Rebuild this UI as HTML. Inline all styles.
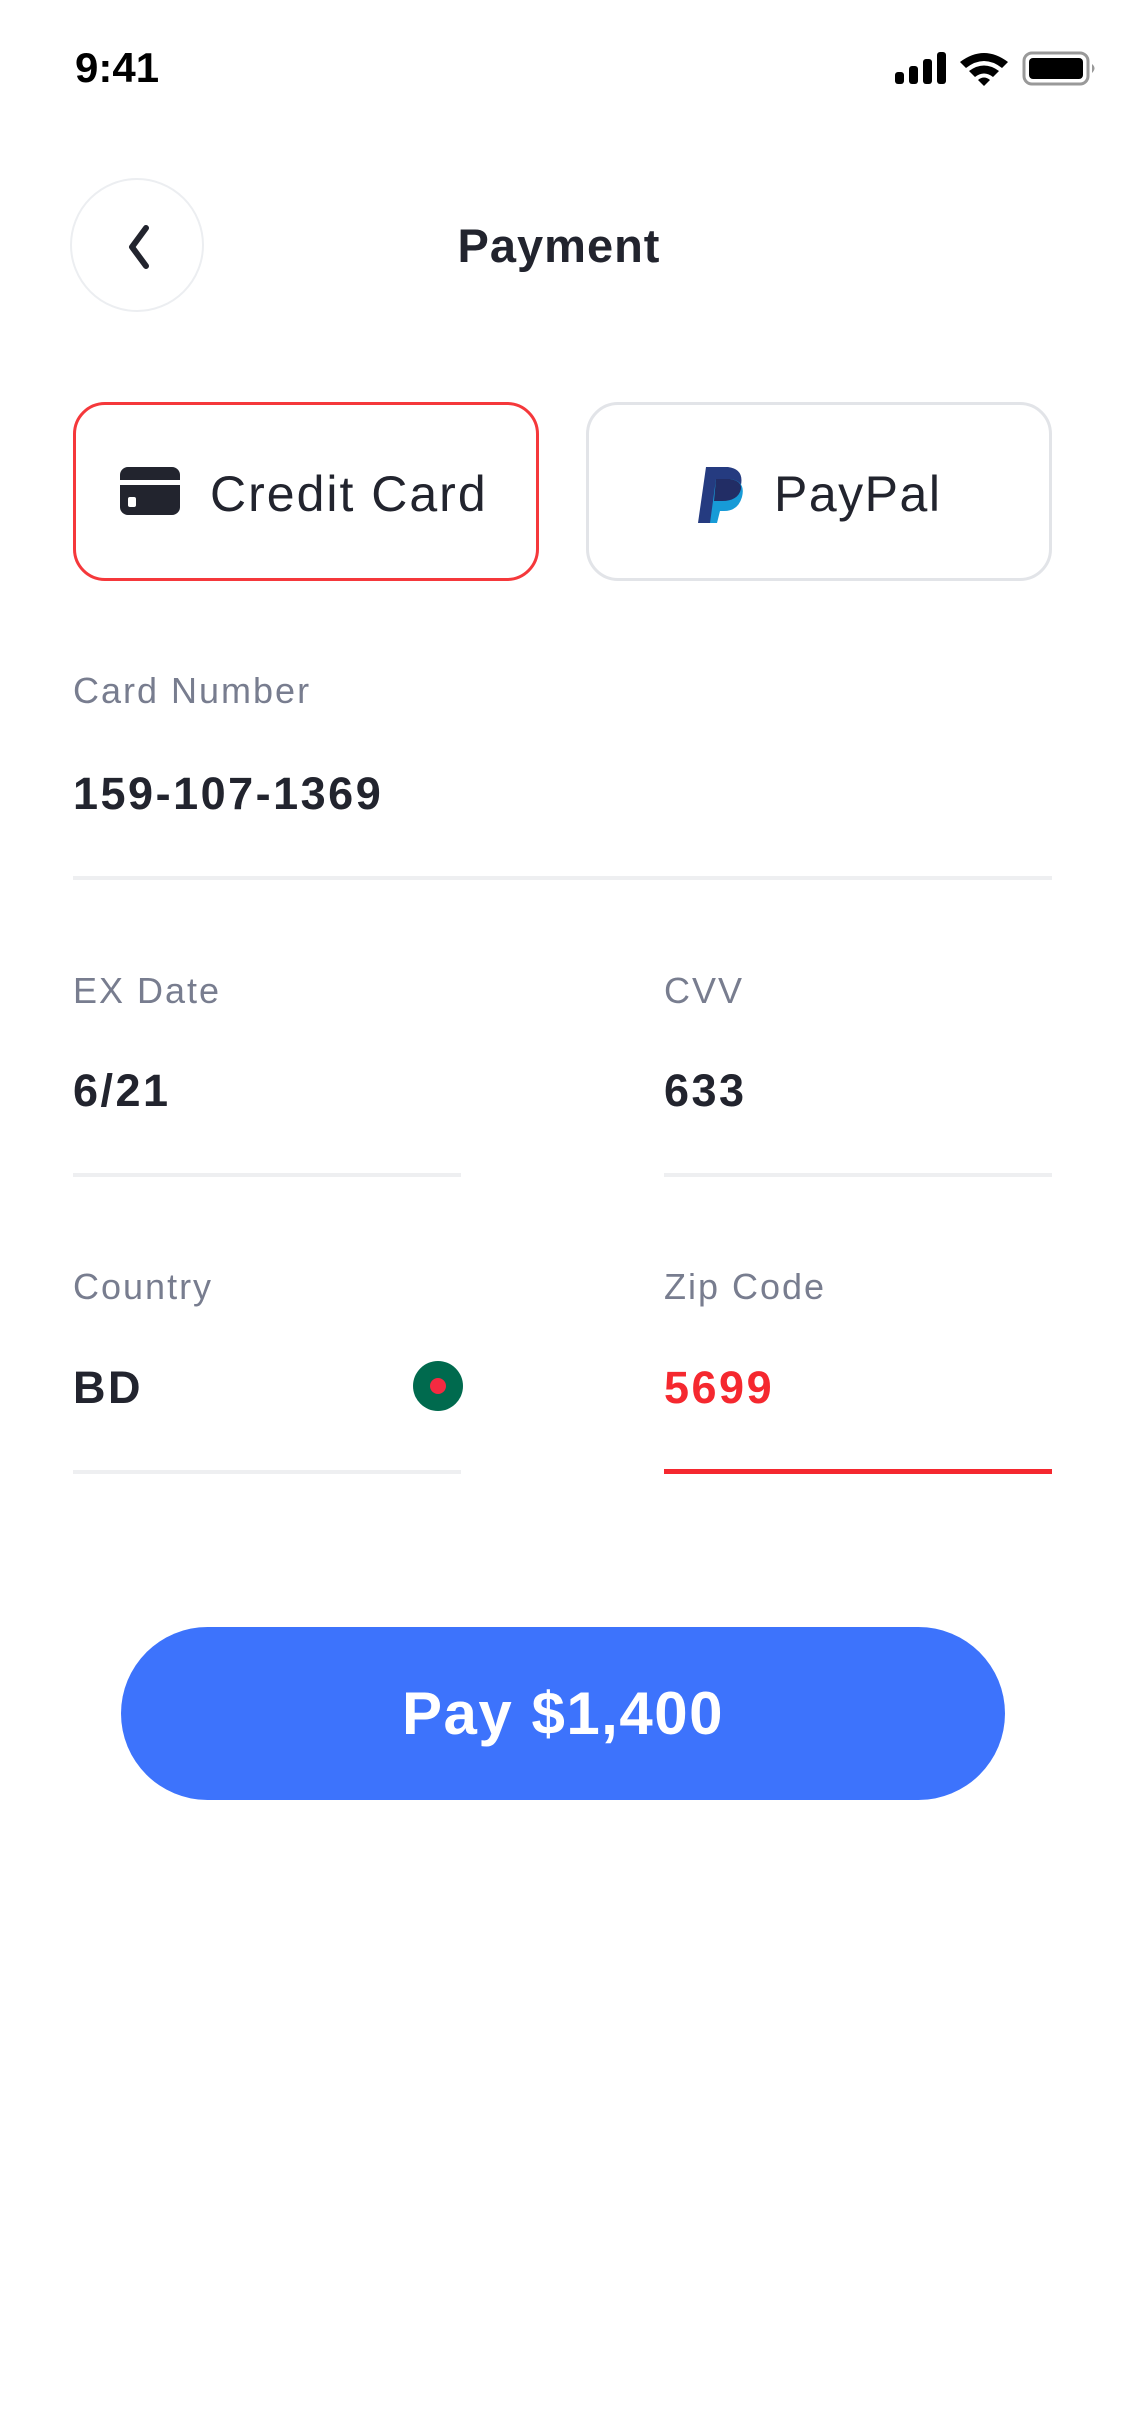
<!DOCTYPE html>
<html><head><meta charset="utf-8"><style>
*{margin:0;padding:0;box-sizing:border-box}
body{width:1125px;height:2436px;background:#fff;position:relative;overflow:hidden;font-family:"Liberation Sans",sans-serif;color:#22242e}
.a{position:absolute}
.lbl{font-size:36px;color:#787d8f;letter-spacing:2px}
.val{font-size:45px;font-weight:bold;color:#22242e;letter-spacing:2.5px}
.line{height:4px;background:#eeeff1}
</style></head><body>
<div class="a" style="left:75px;top:44px;font-size:42px;font-weight:bold;color:#000">9:41</div>
<svg class="a" style="left:893px;top:50px" width="210" height="40" viewBox="0 0 210 40">
<rect x="2" y="22" width="9" height="12" rx="3"/><rect x="16" y="16" width="9" height="18" rx="3"/><rect x="30" y="9" width="9" height="25" rx="3"/><rect x="44" y="2" width="9" height="32" rx="3"/>
<path d="M67 12 Q91 -6 115 12 L109 18 Q91 4 73 18Z"/><path d="M76 21 Q91 10 106 21 L100 27 Q91 20 82 27Z"/><path d="M85 30 Q91 25 97 30 L91 36Z"/>
<rect x="131" y="3" width="64" height="31" rx="8" fill="none" stroke="#999" stroke-width="3"/><rect x="136" y="8" width="54" height="21" rx="4"/><path d="M199 14 Q204 18 199 23Z" fill="#999"/>
</svg>
<div class="a" style="left:70px;top:178px;width:134px;height:134px;border:2px solid #eceef1;border-radius:50%"></div>
<svg class="a" style="left:122px;top:224px" width="32" height="46" viewBox="0 0 32 46"><path d="M24 4 L10 23 L24 42" fill="none" stroke="#22242e" stroke-width="6" stroke-linecap="round" stroke-linejoin="round"/></svg>
<div class="a" style="left:0;width:1118px;top:218px;text-align:center;font-size:47px;font-weight:bold;letter-spacing:1px">Payment</div>
<div class="a" style="left:73px;top:402px;width:466px;height:179px;border:3px solid #f5383b;border-radius:32px"></div>
<div class="a" style="left:586px;top:402px;width:466px;height:179px;border:3px solid #e2e4e8;border-radius:32px"></div>
<svg class="a" style="left:120px;top:467px" width="60" height="48" viewBox="0 0 60 48"><rect x="0" y="0" width="60" height="48" rx="8" fill="#22242e"/><rect x="0" y="13" width="60" height="5" fill="#fff"/><rect x="8" y="30" width="8" height="10" rx="2" fill="#fff"/></svg>
<div class="a" style="left:210px;top:465px;font-size:50px;color:#22242e;letter-spacing:2px">Credit Card</div>
<svg class="a" style="left:698px;top:467px" width="48" height="56" viewBox="0 0 48 56"><path d="M8 0 H30 Q46 2 43 18 Q40 34 24 34 H18 L14 56 H0Z" fill="#253b80"/><path d="M18 12 H32 Q48 14 44 30 Q40 44 26 44 H22 L19 56 H12Z" fill="#179bd7"/><path d="M18 12 H32 Q44 14 43 22 Q40 34 24 34 H16Z" fill="#222d65"/></svg>
<div class="a" style="left:774px;top:465px;font-size:50px;color:#22242e;letter-spacing:1.5px">PayPal</div>
<div class="a lbl" style="left:73px;top:670px">Card Number</div>
<div class="a val" style="left:73px;top:768px">159-107-1369</div>
<div class="a line" style="left:73px;top:876px;width:979px"></div>
<div class="a lbl" style="left:73px;top:970px">EX Date</div>
<div class="a val" style="left:73px;top:1065px">6/21</div>
<div class="a line" style="left:73px;top:1173px;width:388px"></div>
<div class="a lbl" style="left:664px;top:970px">CVV</div>
<div class="a val" style="left:664px;top:1065px">633</div>
<div class="a line" style="left:664px;top:1173px;width:388px"></div>
<div class="a lbl" style="left:73px;top:1266px">Country</div>
<div class="a val" style="left:73px;top:1362px">BD</div>
<div class="a" style="left:413px;top:1361px;width:50px;height:50px;border-radius:50%;background:#006a4e"></div>
<div class="a" style="left:430px;top:1378px;width:16px;height:16px;border-radius:50%;background:#f42a41"></div>
<div class="a line" style="left:73px;top:1470px;width:388px"></div>
<div class="a lbl" style="left:664px;top:1266px">Zip Code</div>
<div class="a val" style="left:664px;top:1362px;color:#f5282f">5699</div>
<div class="a" style="left:664px;top:1469px;width:388px;height:5px;background:#f5282f"></div>
<div class="a" style="left:121px;top:1627px;width:884px;height:173px;border-radius:87px;background:#3d73fc;color:#fff;font-size:60px;font-weight:bold;text-align:center;line-height:173px;letter-spacing:1.5px">Pay $1,400</div>
</body></html>
